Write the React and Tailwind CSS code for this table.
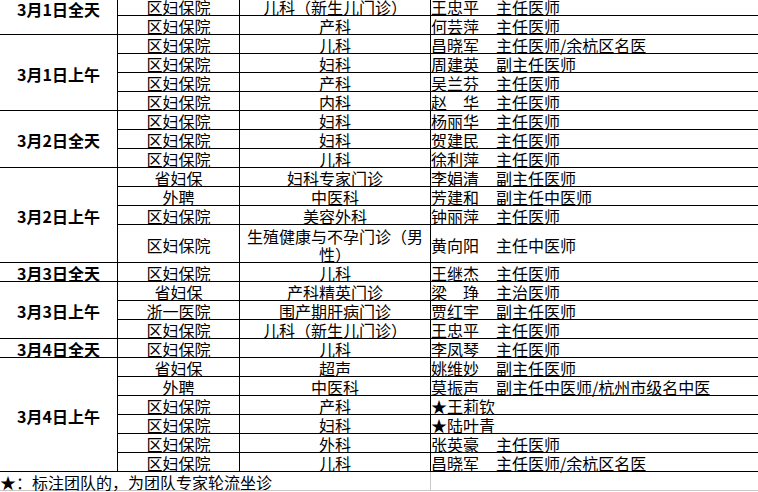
import React from 'react';

const groups = [
  {
    label: '3月1日全天',
    first: true,
    rows: [
      ['区妇保院', '儿科（新生儿门诊）', '王忠平', '主任医师'],
      ['区妇保院', '产科', '何芸萍', '主任医师'],
    ],
  },
  {
    label: '3月1日上午',
    rows: [
      ['区妇保院', '儿科', '昌晓军', '主任医师/余杭区名医'],
      ['区妇保院', '妇科', '周建英', '副主任医师'],
      ['区妇保院', '产科', '吴兰芬', '主任医师'],
      ['区妇保院', '内科', '赵　华', '主任医师'],
    ],
  },
  {
    label: '3月2日全天',
    rows: [
      ['区妇保院', '妇科', '杨丽华', '主任医师'],
      ['区妇保院', '妇科', '贺建民', '主任医师'],
      ['区妇保院', '儿科', '徐利萍', '主任医师'],
    ],
  },
  {
    label: '3月2日上午',
    rows: [
      ['省妇保', '妇科专家门诊', '李娟清', '副主任医师'],
      ['外聘', '中医科', '芳建和', '副主任中医师'],
      ['区妇保院', '美容外科', '钟丽萍', '主任医师'],
      ['区妇保院', ['生殖健康与不孕门诊（男', '性）'], '黄向阳', '主任中医师', true],
    ],
  },
  {
    label: '3月3日全天',
    rows: [['区妇保院', '儿科', '王继杰', '主任医师']],
  },
  {
    label: '3月3日上午',
    rows: [
      ['省妇保', '产科精英门诊', '梁　琤', '主治医师'],
      ['浙一医院', '围产期肝病门诊', '贾红宇', '副主任医师'],
      ['区妇保院', '儿科（新生儿门诊）', '王忠平', '主任医师'],
    ],
  },
  {
    label: '3月4日全天',
    rows: [['区妇保院', '儿科', '李凤琴', '主任医师']],
  },
  {
    label: '3月4日上午',
    rows: [
      ['省妇保', '超声', '姚维妙', '副主任医师'],
      ['外聘', '中医科', '莫振声', '副主任中医师/杭州市级名中医'],
      ['区妇保院', '产科', '★王莉钦', ''],
      ['区妇保院', '妇科', '★陆叶青', ''],
      ['区妇保院', '外科', '张英豪', '主任医师'],
      ['区妇保院', '儿科', '昌晓军', '主任医师/余杭区名医'],
    ],
  },
];

const spanClass = {
  1: 'row-span-1',
  2: 'row-span-2',
  3: 'row-span-3',
  4: 'row-span-4',
  5: 'row-span-5',
  6: 'row-span-6',
};

const cell = 'border-b border-r border-black flex items-center pt-[2px] whitespace-nowrap';

export default function App() {
  return (
    <div className="w-[758px] h-[492px] overflow-hidden bg-white text-black text-[16px] leading-[16px] font-['Noto_Sans_CJK_SC',sans-serif]">
      <div className="-mt-[3px] grid grid-cols-[118px_122px_191px_1fr] auto-rows-[19px]">
        {groups.map((g) => {
          const span = g.rows.reduce((n, r) => n + (r[4] ? 2 : 1), 0);
          return (
            <React.Fragment key={g.label}>
              <div
                className={`${spanClass[span]} border-b border-r border-black flex justify-center font-bold ${
                  g.first ? 'items-start pt-[4px]' : 'items-center pt-[2px]'
                }`}
              >
                {g.label}
              </div>
              {g.rows.map((r, i) => (
                <React.Fragment key={i}>
                  <div className={`${cell} justify-center ${r[4] ? 'row-span-2' : ''}`}>{r[0]}</div>
                  <div className={`${r[4] ? 'row-span-2 leading-[18px]' : ''} ${cell} justify-center`}>
                    {Array.isArray(r[1]) ? (
                      <div className="flex flex-col items-center">
                        {r[1].map((line) => (
                          <span key={line}>{line}</span>
                        ))}
                      </div>
                    ) : (
                      r[1]
                    )}
                  </div>
                  <div className={`${r[4] ? 'row-span-2' : ''} border-b border-black flex items-center pt-[2px] whitespace-nowrap`}>
                    <span className="inline-block w-[65px]">{r[2]}</span>
                    <span>{r[3]}</span>
                  </div>
                </React.Fragment>
              ))}
            </React.Fragment>
          );
        })}

        {/* footnote row */}
        <div className="border-b border-[#c8c8c8] flex items-center pt-[2px] whitespace-nowrap">
          ★：标注团队的，为团队专家轮流坐诊
        </div>
        <div className="border-b border-[#c8c8c8]"></div>
        <div className="border-b border-r border-[#c8c8c8]"></div>
        <div className="border-b border-[#c8c8c8]"></div>
      </div>
    </div>
  );
}
